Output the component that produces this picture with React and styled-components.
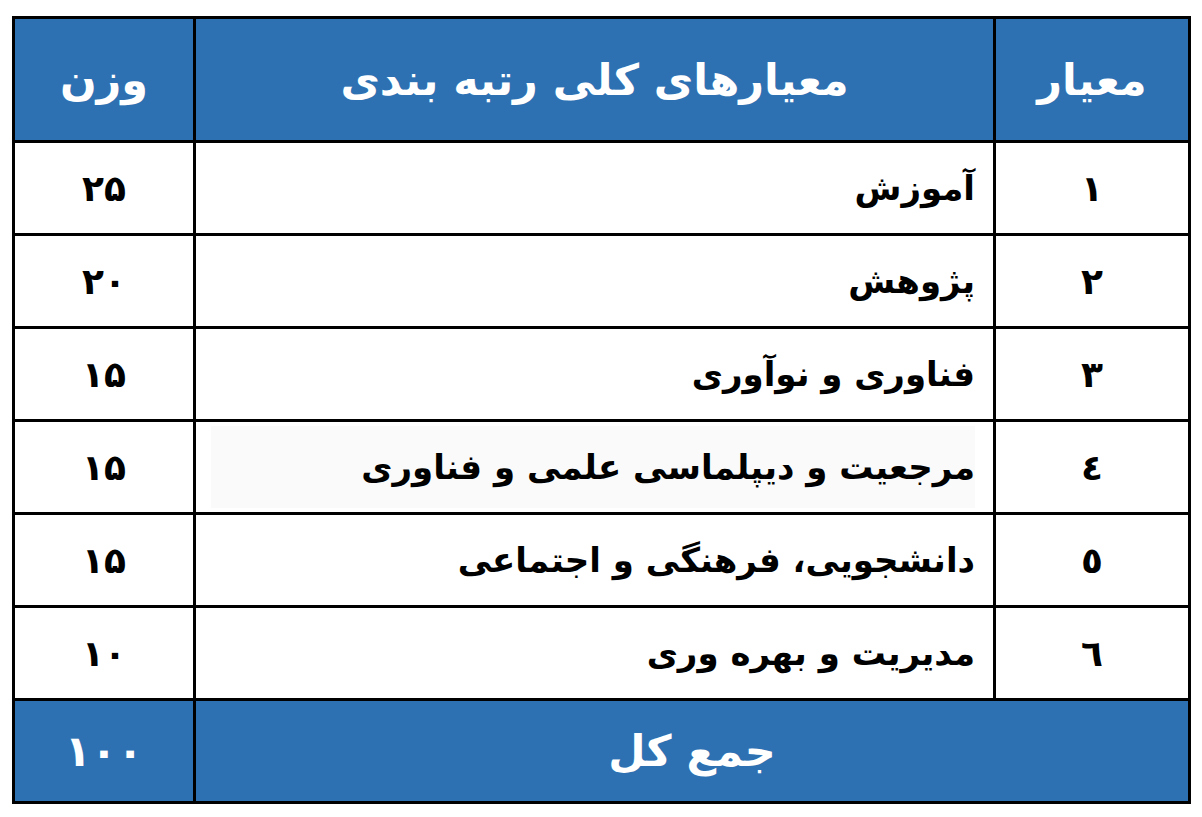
import React from "react";
import styled, { createGlobalStyle } from "styled-components";

const rows = [
  { id: "۱", title: "آموزش", weight: "۲۵" },
  { id: "۲", title: "پژوهش", weight: "۲۰" },
  { id: "۳", title: "فناوری و نوآوری", weight: "۱۵" },
  { id: "٤", title: "مرجعیت و دیپلماسی علمی و فناوری", weight: "۱۵", shaded: true },
  { id: "٥", title: "دانشجویی، فرهنگی و اجتماعی", weight: "۱۵" },
  { id: "٦", title: "مدیریت و بهره وری", weight: "۱۰" },
];

const GlobalStyle = createGlobalStyle`
  body {
    margin: 0;
    background: #ffffff;
    font-family: "DejaVu Sans", "Noto Sans", sans-serif;
  }
`;

const Page = styled.div`
  padding: 16px 0 0 12px;
`;

const Table = styled.div`
  direction: rtl;
  width: 1179px;
  box-sizing: border-box;
  display: grid;
  grid-template-columns: 192px 797px 178px;
  grid-template-rows: 121px repeat(6, 90px) 100px;
  gap: 3px;
  padding: 3px;
  background: #000;
`;

const Cell = styled.div`
  display: flex;
  align-items: center;
  justify-content: ${(p) => (p.$start ? "flex-start" : "center")};
  padding: ${(p) => (p.$start ? "0 18px 0 0" : "0")};
  background: ${(p) => (p.$head ? "#2e71b3" : "#ffffff")};
  color: ${(p) => (p.$head ? "#ffffff" : "#000000")};
  font-size: ${(p) => (p.$head ? "43px" : p.$num ? "36px" : "34px")};
  font-weight: 700;
  grid-column: ${(p) => (p.$span ? `span ${p.$span}` : "auto")};
  white-space: nowrap;
`;

const Label = styled.span`
  background: ${(p) => (p.$shaded ? "#fafafa" : "transparent")};
  line-height: 40px;
  padding: ${(p) => (p.$shaded ? "21px 0 21px 150px" : "0")};
`;

export default function App() {
  return (
    <Page>
      <GlobalStyle />
      <Table>
        <Cell $head>معیار</Cell>
        <Cell $head>معیارهای کلی رتبه بندی</Cell>
        <Cell $head>وزن</Cell>

        {rows.map((r) => (
          <React.Fragment key={r.id}>
            <Cell $num>{r.id}</Cell>
            <Cell $start>
              <Label $shaded={r.shaded}>{r.title}</Label>
            </Cell>
            <Cell $num>{r.weight}</Cell>
          </React.Fragment>
        ))}

        <Cell $head $span={2}>جمع کل</Cell>
        <Cell $head>۱۰۰</Cell>
      </Table>
    </Page>
  );
}
